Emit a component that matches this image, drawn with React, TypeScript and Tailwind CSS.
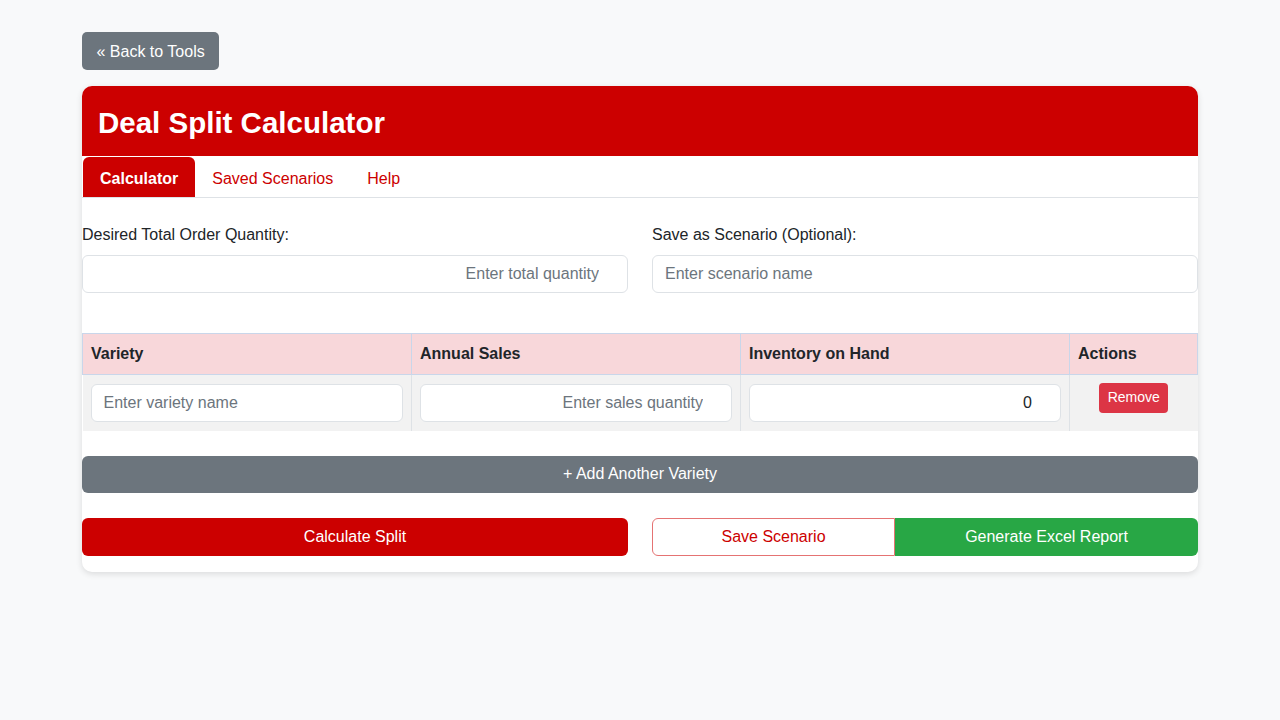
import { useState } from 'react'

type Row = { name: string; sales: string; inventory: string }

export default function App() {
  const [total, setTotal] = useState('')
  const [scenario, setScenario] = useState('')
  const [rows, setRows] = useState<Row[]>([{ name: '', sales: '', inventory: '0' }])
  const [tab, setTab] = useState('calculator')

  const update = (i: number, key: keyof Row, value: string) => {
    setRows(rows.map((r, idx) => (idx === i ? { ...r, [key]: value } : r)))
  }

  const inputBase =
    'w-full h-[38px] rounded-[6px] border border-[#dee2e6] bg-white text-[16px] text-[#212529] placeholder-[#6c757d] focus:outline-none'

  return (
    <div className="min-h-screen bg-[#f8f9fa] px-[82px] pt-[32px] text-[#212529]" style={{ fontFamily: '"Liberation Sans", Arial, sans-serif' }}>
      <button className="h-[38px] px-[14.5px] pt-[2px] rounded-[5px] bg-[#6c757d] text-white text-[16px]">« Back to Tools</button>

      <div className="mt-[16px] bg-white rounded-[10px] shadow-[0_2px_6px_rgba(0,0,0,0.12)] overflow-hidden pb-[16px]">
        <div className="h-[70px] bg-[#cc0000] flex items-center px-[16px] pt-[4px]">
          <h1 className="text-white text-[29.5px] font-bold">Deal Split Calculator</h1>
        </div>

        <div className="mt-[1px] flex border-b border-[#dee2e6] px-[1px]">
          {[
            ['calculator', 'Calculator'],
            ['saved', 'Saved Scenarios'],
            ['help', 'Help'],
          ].map(([key, label]) => (
            <button
              key={key}
              onClick={() => setTab(key)}
              className={`h-[40px] pt-[3px] px-[17px] rounded-t-[6px] text-[16px] ${
                tab === key ? 'bg-[#cc0000] text-white font-bold' : 'text-[#cc0000]'
              }`}
            >
              {label}
            </button>
          ))}
        </div>

        <div className="grid grid-cols-2 gap-x-[24px] mt-[25px]">
          <div>
            <label className="block text-[16px] mb-[8px]">Desired Total Order Quantity:</label>
            <input
              type="text"
              value={total}
              onChange={e => setTotal(e.target.value)}
              placeholder="Enter total quantity"
              className={`${inputBase} text-right pr-[28px] pl-[12px]`}
            />
          </div>
          <div>
            <label className="block text-[16px] mb-[8px]">Save as Scenario (Optional):</label>
            <input
              type="text"
              value={scenario}
              onChange={e => setScenario(e.target.value)}
              placeholder="Enter scenario name"
              className={`${inputBase} px-[12px]`}
            />
          </div>
        </div>

        <table className="w-full mt-[40px] border-collapse table-fixed">
          <colgroup>
            <col className="w-[329px]" />
            <col className="w-[329px]" />
            <col className="w-[329px]" />
            <col />
          </colgroup>
          <thead>
            <tr className="bg-[#f8d7da] h-[41px]">
              {['Variety', 'Annual Sales', 'Inventory on Hand', 'Actions'].map(h => (
                <th key={h} className="border border-[#c9d6ea] text-left font-bold text-[16px] px-[8px]">
                  {h}
                </th>
              ))}
            </tr>
          </thead>
          <tbody>
            {rows.map((r, i) => (
              <tr key={i} className="bg-[#f2f2f2] h-[56px]">
                <td className="border-r border-[#dee2e6] px-[8px]">
                  <input
                    value={r.name}
                    onChange={e => update(i, 'name', e.target.value)}
                    placeholder="Enter variety name"
                    className={`${inputBase} h-[37px] px-[12px]`}
                  />
                </td>
                <td className="border-r border-[#dee2e6] px-[8px]">
                  <input
                    value={r.sales}
                    onChange={e => update(i, 'sales', e.target.value)}
                    placeholder="Enter sales quantity"
                    className={`${inputBase} h-[37px] text-right pr-[28px] pl-[12px]`}
                  />
                </td>
                <td className="border-r border-[#dee2e6] px-[8px]">
                  <input
                    value={r.inventory}
                    onChange={e => update(i, 'inventory', e.target.value)}
                    className={`${inputBase} h-[37px] text-right pr-[28px] pl-[12px]`}
                  />
                </td>
                <td className="text-center">
                  <button
                    onClick={() => setRows(rows.filter((_, idx) => idx !== i))}
                    className="h-[30px] px-[8.5px] rounded-[4px] bg-[#dc3545] text-white text-[14px] -translate-y-[5px]"
                  >
                    Remove
                  </button>
                </td>
              </tr>
            ))}
          </tbody>
        </table>

        <button
          onClick={() => setRows([...rows, { name: '', sales: '', inventory: '0' }])}
          className="mt-[25px] w-full h-[37px] rounded-[6px] bg-[#6c757d] text-white text-[16px]"
        >
          + Add Another Variety
        </button>

        <div className="grid grid-cols-2 gap-x-[24px] mt-[25px]">
          <button className="h-[38px] rounded-[6px] bg-[#cc0000] text-white text-[16px]">Calculate Split</button>
          <div className="flex h-[38px]">
            <button className="w-[243px] rounded-l-[6px] border border-[#e57373] bg-white text-[#cc0000] text-[16px]">Save Scenario</button>
            <button className="flex-1 rounded-r-[6px] bg-[#28a745] text-white text-[16px]">Generate Excel Report</button>
          </div>
        </div>
      </div>
    </div>
  )
}
